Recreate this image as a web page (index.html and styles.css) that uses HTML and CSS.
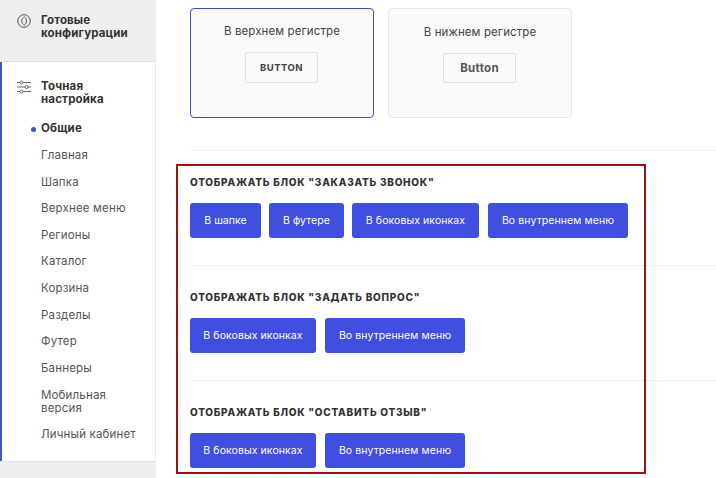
FILE: index.html
```html
<!DOCTYPE html>
<html lang="ru">
<head>
<meta charset="utf-8">
<title>Настройки</title>
<link rel="stylesheet" href="styles.css">
</head>
<body>
<div class="page">
  <aside class="sidebar">
    <div class="ready">
      <svg class="icon" viewBox="0 0 14 14" width="14" height="14" fill="none" stroke="#444" stroke-width="0.9"><circle cx="7" cy="7" r="6.300"/><path d="M7.600 3C6 3.600 4.800 5 4.800 7s1.200 3.400 2.800 4c1.200-.8 1.800-2.200 1.800-4S8.800 3.800 7.600 3Z"/></svg>
      <span class="group-title">Готовые конфигурации</span>
    </div>
    <div class="tuning">
      <div class="tuning-head">
        <svg class="icon" viewBox="0 0 14 14" width="14" height="14" fill="none" stroke="#444" stroke-width="0.8"><path d="M0 2.500h3M6 2.500h8M0 7h8M11 7h3M0 11.500h3M6 11.500h8"/><circle cx="4.500" cy="2.500" r="1.500"/><circle cx="9.500" cy="7" r="1.500"/><circle cx="4.500" cy="11.500" r="1.500"/></svg>
        <span class="group-title">Точная настройка</span>
      </div>
      <ul class="menu">
        <li class="active">Общие</li>
        <li>Главная</li>
        <li>Шапка</li>
        <li>Верхнее меню</li>
        <li>Регионы</li>
        <li>Каталог</li>
        <li>Корзина</li>
        <li>Разделы</li>
        <li>Футер</li>
        <li>Баннеры</li>
        <li>Мобильная версия</li>
        <li>Личный кабинет</li>
      </ul>
    </div>
    <div class="side-rest"></div>
  </aside>
  <main class="main">
    <div class="cards">
      <div class="card selected">
        <div class="card-label">В верхнем регистре</div>
        <div class="sample upper">BUTTON</div>
      </div>
      <div class="card">
        <div class="card-label second">В нижнем регистре</div>
        <div class="sample lower">Button</div>
      </div>
    </div>
    <section class="block first">
      <h3>ОТОБРАЖАТЬ БЛОК "ЗАКАЗАТЬ ЗВОНОК"</h3>
      <div class="buttons">
        <a class="btn w71">В шапке</a>
        <a class="btn w75">В футере</a>
        <a class="btn w127">В боковых иконках</a>
        <a class="btn w140 shifted">Во внутреннем меню</a>
      </div>
    </section>
    <section class="block">
      <h3>ОТОБРАЖАТЬ БЛОК "ЗАДАТЬ ВОПРОС"</h3>
      <div class="buttons">
        <a class="btn w126">В боковых иконках</a>
        <a class="btn w140 shifted">Во внутреннем меню</a>
      </div>
    </section>
    <section class="block">
      <h3>ОТОБРАЖАТЬ БЛОК "ОСТАВИТЬ ОТЗЫВ"</h3>
      <div class="buttons">
        <a class="btn w126">В боковых иконках</a>
        <a class="btn w140 shifted">Во внутреннем меню</a>
      </div>
    </section>
    <div class="highlight"></div>
  </main>
</div>
</body>
</html>
```
FILE: styles.css
```css
* { box-sizing: border-box; }
html, body { margin: 0; padding: 0; height: 100%; overflow: hidden; background: #fff; }
body { font-family: Inter, "Noto Sans", "Liberation Sans", sans-serif; color: #333; }
.page { display: flex; width: 716px; height: 478px; }
.sidebar { width: 156px; flex: none; display: flex; flex-direction: column; border-right: 1px solid #ececec; }
.ready { height: 62px; background: #efefef; border-bottom: 1px solid #e2e2e2; display: flex; gap: 10px; padding: 14px 0 0 17px; }
.icon { flex: none; }
.group-title { font-size: 11.500px; font-weight: 700; line-height: 13px; color: #333; width: 96px; letter-spacing: 0.150px; }
.tuning { height: 399px; border-left: 2px solid #4255c4; padding: 18px 0 0 15px; }
.tuning-head { display: flex; gap: 10px; margin-bottom: 16.300px; }
.menu { list-style: none; margin: 0; padding: 0 0 0 24px; }
.menu li { font-size: 11.500px; line-height: 13px; color: #555; margin-bottom: 13.640px; width: 100px; position: relative; letter-spacing: 0.170px; }
.menu li.active { font-weight: 700; color: #333; }
.menu li.active::before { content: ""; position: absolute; left: -10px; top: 5px; width: 5px; height: 5px; border-radius: 50%; background: #3f51d8; }
.side-rest { flex: 1; background: #efefef; border-top: 1px solid #e2e2e2; }
.main { flex: 1; position: relative; padding: 8px 0 0 34px; min-width: 0; }
.cards { display: flex; gap: 14px; }
.card { width: 184px; height: 110px; background: #fafafa; border: 1px solid #e8e8e8; border-radius: 4px; display: flex; flex-direction: column; align-items: center; padding-top: 14px; }
.card.selected { border-color: #3f4fb8; }
.card-label { font-size: 11.500px; line-height: 16px; color: #444; height: 29px; letter-spacing: 0.100px; }
.card-label.second { height: 30px; padding-top: 1px; }
.sample { width: 73px; height: 31px; margin-right: 1px; border: 1px solid #e0e0e0; border-radius: 2px; display: flex; align-items: center; justify-content: center; font-weight: 700; color: #444; }
.upper { font-size: 9.500px; letter-spacing: 0.500px; }
.lower { font-size: 11.500px; height: 30px; letter-spacing: 0.300px; color: #555; }
.block { border-top: 1px solid #f1f1f1; height: 115px; padding-top: 25px; }
.block.first { margin-top: 32px; }
h3 { margin: 0; font-size: 10px; line-height: 12px; font-weight: 800; letter-spacing: 0.750px; color: #333; }
.buttons { display: flex; gap: 8px; margin-top: 15px; }
.btn { height: 35px; background: #3f4fe0; border-radius: 3px; color: #fff; font-size: 10.500px; letter-spacing: 0.080px; display: flex; align-items: center; justify-content: center; white-space: nowrap; }
.w71 { width: 71px; }
.w75 { width: 75px; }
.w126 { width: 126px; }
.w127 { width: 127px; }
.w140 { width: 140px; }
.shifted { margin-left: 1px; }
.highlight { position: absolute; left: 20px; top: 164px; width: 470px; height: 310px; border: 2px solid #a01212; pointer-events: none; }
```
